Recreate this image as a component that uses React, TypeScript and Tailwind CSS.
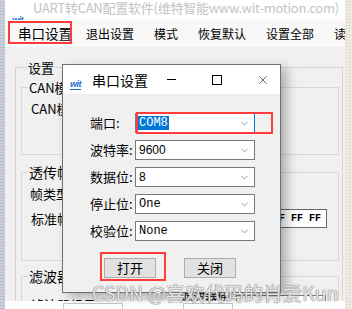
import { ChevronDown, X } from 'lucide-react';

const cjk = "font-['Noto_Sans_CJK_SC','Noto_Sans',sans-serif]";

function Combo({ value, mono, selected }: { value: string; mono?: boolean; selected?: boolean }) {
  return (
    <div
      className={`flex items-center w-[120px] h-[20px] bg-white border ${
        selected ? 'border-[#7a7a7a] border-r-[#0078d7]' : 'border-[#7a7a7a]'
      } pl-[2px] pr-[4px]`}
    >
      <span
        className={`flex-1 text-[12px] leading-[14px] ${
          mono ? "font-['Liberation_Mono',monospace]" : "font-['Liberation_Sans',sans-serif]"
        }`}
      >
        <span className={selected ? 'bg-[#0078d7] text-white px-[1px]' : 'px-[1px] text-black'}>{value}</span>
      </span>
      <ChevronDown size={11} strokeWidth={1.3} className="text-[#555]" />
    </div>
  );
}

function Row({ label, children }: { label: string; children: React.ReactNode }) {
  return (
    <div className="flex items-center h-[20px]">
      <span className={`w-[45px] text-[13px] leading-[16px] text-black ${cjk}`}>{label}</span>
      {children}
    </div>
  );
}

function Logo() {
  return (
    <span className="inline-block text-[9px] leading-[9px] font-bold italic text-[#1b6fd1] font-['Liberation_Sans',sans-serif] tracking-[-0.5px] border-b border-[#1b6fd1]">
      wit
    </span>
  );
}

export default function App() {
  return (
    <div className={`relative w-[352px] h-[309px] overflow-hidden flex bg-[#f0f0f0] ${cjk}`}>
      {/* escritorio detrás, izquierda */}
      <div className="w-[5px] h-full shrink-0 bg-[#c9ced8] [background-image:repeating-linear-gradient(0deg,#b7bfcc_0px,#b7bfcc_1px,transparent_1px,transparent_3px)]" />

      {/* ventana principal */}
      <div className="w-[340px] h-full shrink-0 flex flex-col">
        <div className="h-[20px] bg-white flex items-start pl-[7px] overflow-hidden">
          <div className="mt-[4px] w-[21px] shrink-0">
            <Logo />
          </div>
          <span className="min-w-0 -mt-[1px] text-[13px] leading-[18px] tracking-[-0.25px] text-[#c4c4c4] whitespace-nowrap">
            UART转CAN配置软件(维特智能www.wit-motion.com)
          </span>
        </div>

        <div className="h-[27px] bg-[#f8f8f8] flex items-center pl-[13px] text-[13px] text-black whitespace-nowrap overflow-hidden">
          <span className="text-[13.5px] mr-[14px]">串口设置</span>
          <span className="text-[12px] mr-[20px]">退出设置</span>
          <span className="text-[12px] mr-[20px]">模式</span>
          <span className="text-[12px] mr-[20px]">恢复默认</span>
          <span className="text-[12px] mr-[20px]">设置全部</span>
          <span className="text-[12px]">读取全部</span>
        </div>

        <div className="h-[254px] bg-[#f0f0f0] overflow-hidden pt-[13px] pl-[10px]">
          <fieldset className="w-[328px] h-[260px] border border-[#d5d5d5] pl-[5px] pr-[3px]">
            <legend className="ml-[6px] px-[1px] text-[13px] leading-[15px] text-black">设置</legend>

            <fieldset className="mt-[5px] h-[75px] border border-[#d8d8d8] pl-[9px]">
              <legend className="-ml-[3px] px-[1px] text-[13px] leading-[15px] text-black">CAN模式设置</legend>
              <div className="pt-[6px] text-[13px] leading-[15px] text-black">CAN模式:</div>
            </fieldset>

            <fieldset className="mt-[10px] h-[96px] border border-[#d8d8d8] pl-[8px] pr-[11px]">
              <legend className="-ml-[2px] px-[1px] text-[14px] leading-[15px] text-black">透传帧设置</legend>
              <div className="pt-[6px] text-[13px] leading-[15px] text-black">帧类型:</div>
              <div className="mt-[8px] flex items-center justify-between">
                <span className="text-[13px] leading-[15px] text-black pl-[1px]">标准帧ID:</span>
                <div className="w-[150px] h-[19px] bg-white border border-[#6a6a6a] flex items-center justify-end pr-[5px]">
                  <span className="font-['Liberation_Mono',monospace] text-[10px] font-bold text-black whitespace-nowrap">
                    FF FF FF FF FF FF
                  </span>
                </div>
              </div>
            </fieldset>

            <fieldset className="mt-[8px] h-[60px] border border-[#d8d8d8] pl-[9px] pr-[8px]">
              <legend className="-ml-[3px] px-[1px] text-[14px] leading-[15px] text-black">滤波器设置</legend>
              <div className="pt-[5px] flex items-center">
                <span className="text-[13px] leading-[15px] text-black w-[150px]">滤波器组号:</span>
                <span className="text-[12px] leading-[15px] text-black w-[55px]">滤波器使能:</span>
                <div className="w-[90px] h-[19px] bg-white border border-[#7a7a7a]" />
              </div>
            </fieldset>
          </fieldset>
        </div>

        <div className="h-[8px] bg-white flex items-end gap-[60px] pl-[58px]">
          <div className="w-[60px] h-[6px] border-t border-x border-[#c8c8c8]" />
          <div className="w-[50px] h-[6px] border-t border-x border-[#c8c8c8]" />
        </div>
      </div>

      {/* escritorio detrás, derecha */}
      <div className="w-[7px] h-full shrink-0 bg-[#eeeae2] [background-image:radial-gradient(#d6cfc0_1px,transparent_1px)] [background-size:3px_3px]" />

      {/* diálogo 串口设置 */}
      <div className="absolute left-[62px] top-[64px] w-[219px] h-[229px] border border-[#6e6e6e] bg-[#f0f0f0] flex flex-col shadow-[6px_4px_10px_rgba(0,0,0,0.28)]">
        <div className="h-[29px] bg-white flex items-center">
          <div className="w-[22px] pl-[7px] shrink-0">
            <Logo />
          </div>
          <span className="ml-[7px] text-[14px] leading-[16px] text-black whitespace-nowrap">串口设置</span>
          <div className="ml-auto flex h-full">
            <div className="w-[46px] flex items-center justify-center">
              <div className="w-[9px] h-[1px] bg-black" />
            </div>
            <div className="w-[46px] flex items-center justify-center">
              <div className="w-[10px] h-[10px] border border-black" />
            </div>
            <div className="w-[46px] flex items-center justify-center">
              <X size={14} strokeWidth={1} className="text-black" />
            </div>
          </div>
        </div>

        <div className="flex flex-col gap-[7px] pl-[27px] pt-[19px]">
          <Row label="端口:">
            <Combo value="COM8" mono selected />
          </Row>
          <Row label="波特率:">
            <Combo value="9600" />
          </Row>
          <Row label="数据位:">
            <Combo value="8" />
          </Row>
          <Row label="停止位:">
            <Combo value="One" mono />
          </Row>
          <Row label="校验位:">
            <Combo value="None" mono />
          </Row>
        </div>

        <div className="flex gap-[28px] pl-[41px] mt-[17px]">
          <button className="w-[52px] h-[20px] bg-[#e1e1e1] border border-[#adadad] text-[13px] leading-[16px] text-black">
            打开
          </button>
          <button className="w-[52px] h-[20px] bg-[#e1e1e1] border border-[#adadad] text-[13px] leading-[16px] text-black">
            关闭
          </button>
        </div>
      </div>

      {/* marcas rojas */}
      <div className="absolute left-[8px] top-[21px] w-[64px] h-[23px] border-2 border-[#ff3b3b]" />
      <div className="absolute left-[136px] top-[112px] w-[137px] h-[22px] border-2 border-[#ff3b3b]" />
      <div className="absolute left-[100px] top-[252px] w-[66px] h-[29px] border-2 border-[#ff3b3b]" />

      {/* marca de agua */}
      <div className="absolute left-[92px] top-[280px] text-[19.5px] leading-[26px] whitespace-nowrap text-[#e6e6e6] [text-shadow:0_0_1px_#6e6e6e,0_0_1px_#6e6e6e]">
        CSDN @喜欢代码的肖爱Kun
      </div>
    </div>
  );
}
